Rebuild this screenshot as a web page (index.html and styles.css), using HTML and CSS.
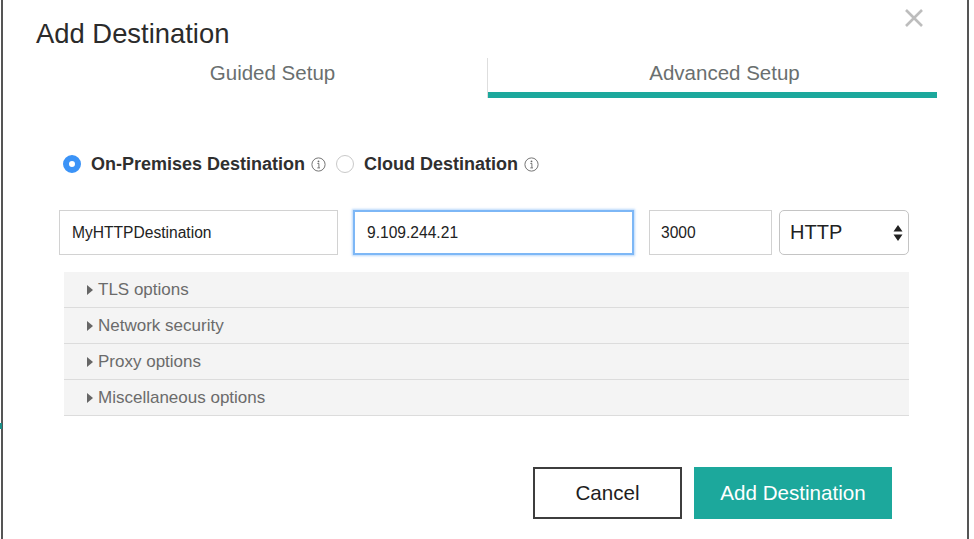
FILE: index.html
```html
<!DOCTYPE html>
<html>
<head>
<meta charset="utf-8">
<title>Add Destination</title>
<link rel="stylesheet" href="styles.css">
</head>
<body>
<div class="edge-mark"></div>
<div class="dialog">
  <button class="close" aria-label="Close">
    <svg width="20" height="20" viewBox="0 0 20 20"><path d="M2 2 L18 18 M18 2 L2 18" stroke="#bdbdbd" stroke-width="2.6" stroke-linecap="butt" fill="none"/></svg>
  </button>
  <h1 class="title">Add Destination</h1>
  <div class="tabs">
    <div class="tab">Guided Setup</div>
    <div class="tab-sep"></div>
    <div class="tab tab-active">Advanced Setup</div>
  </div>

  <div class="radios">
    <label class="radio">
      <span class="dot dot-on"></span>
      <span class="radio-label">On-Premises Destination</span>
      <svg class="info" width="15" height="15" viewBox="0 0 15 15"><circle cx="7.5" cy="7.5" r="6.6" fill="none" stroke="#666" stroke-width="0.9"/><circle cx="7.5" cy="4.4" r="0.9" fill="#666"/><path d="M6.4 6.5 H7.9 V10.8 M6.3 10.9 H9" stroke="#666" stroke-width="0.9" fill="none"/></svg>
    </label>
    <label class="radio">
      <span class="dot"></span>
      <span class="radio-label">Cloud Destination</span>
      <svg class="info" width="15" height="15" viewBox="0 0 15 15"><circle cx="7.5" cy="7.5" r="6.6" fill="none" stroke="#666" stroke-width="0.9"/><circle cx="7.5" cy="4.4" r="0.9" fill="#666"/><path d="M6.4 6.5 H7.9 V10.8 M6.3 10.9 H9" stroke="#666" stroke-width="0.9" fill="none"/></svg>
    </label>
  </div>

  <div class="fields">
    <div class="field f-name">MyHTTPDestination</div>
    <div class="field f-host focused">9.109.244.21</div>
    <div class="field f-port">3000</div>
    <div class="select">
      <span>HTTP</span>
      <svg width="10" height="20" viewBox="0 0 10 20"><path d="M5 2 L9.5 8.5 H0.5 Z M5 18 L9.5 11.5 H0.5 Z" fill="#222"/></svg>
    </div>
  </div>

  <div class="accordion">
    <div class="acc-row"><span class="caret"></span>TLS options</div>
    <div class="acc-row"><span class="caret"></span>Network security</div>
    <div class="acc-row"><span class="caret"></span>Proxy options</div>
    <div class="acc-row"><span class="caret"></span>Miscellaneous options</div>
  </div>

  <div class="actions">
    <button class="btn btn-cancel">Cancel</button>
    <button class="btn btn-primary">Add Destination</button>
  </div>
</div>
</body>
</html>
```

FILE: styles.css
```css
html, body {
  margin: 0;
  padding: 0;
  background: #ffffff;
  font-family: "Liberation Sans", Arial, Helvetica, sans-serif;
  overflow: hidden;
}

.edge-mark {
  position: absolute;
  left: 0;
  top: 423px;
  width: 2px;
  height: 6px;
  background: #1a8f88;
  z-index: 2;
}

.dialog {
  position: relative;
  margin-left: 1px;
  width: 968px;
  height: 539px;
  border-left: 2px solid #555;
  border-right: 2px solid #555;
  background: #fff;
  display: flex;
  flex-direction: column;
  padding-top: 19px;
  box-sizing: border-box;
}

.close {
  position: absolute;
  top: 7px;
  left: 899px;
  width: 24px;
  height: 22px;
  padding: 0;
  border: 0;
  background: transparent;
  display: flex;
  align-items: center;
  justify-content: center;
}

.title {
  margin: 0 0 0 33px;
  font-size: 27.4px;
  line-height: 30px;
  font-weight: normal;
  color: #2b2b2b;
}

.tabs {
  margin-top: 9px;
  margin-left: 55px;
  display: flex;
  height: 40px;
}

.tab {
  width: 429px;
  height: 40px;
  box-sizing: border-box;
  text-align: center;
  font-size: 20.5px;
  line-height: 30px;
  color: #6a6f6f;
}

.tab-sep {
  width: 1px;
  height: 40px;
  background: #dedede;
}

.tab-active {
  width: 449px;
  padding-left: 24px;
  border-bottom: 6px solid #1ca89c;
}

.radios {
  margin-top: 54px;
  margin-left: 60px;
  display: flex;
  align-items: center;
  height: 24px;
}

.radio {
  display: flex;
  align-items: center;
}

.dot {
  width: 18px;
  height: 18px;
  box-sizing: border-box;
  border-radius: 50%;
  border: 1px solid #c9c9c9;
  background: #fff;
  margin-right: 10px;
}

.dot-on {
  border: 6px solid #3b93f7;
  background: #fff;
}

.radio-label {
  font-size: 18px;
  font-weight: bold;
  color: #2f2f2f;
}

.info {
  margin-left: 6px;
  margin-right: 10px;
}

.fields {
  margin-top: 34px;
  margin-left: 56px;
  display: flex;
  height: 45px;
}

.field {
  height: 45px;
  box-sizing: border-box;
  border: 1px solid #d2d2d2;
  font-size: 15.6px;
  line-height: 44px;
  padding-left: 12px;
  color: #222;
}

.f-name { width: 279px; margin-right: 15px; }

.f-host {
  width: 281px;
  margin-right: 15px;
}

.focused {
  border: 2px solid #7db7f6;
  line-height: 42px;
  padding-left: 12px;
  box-shadow: 0 0 2px 1px rgba(125, 183, 246, 0.55);
}

.f-port { width: 123px; margin-right: 7px; padding-left: 11px; }

.select {
  width: 130px;
  height: 45px;
  box-sizing: border-box;
  border: 1px solid #c4c4c4;
  border-radius: 5px;
  display: flex;
  align-items: center;
  justify-content: space-between;
  padding: 0 5px 0 10px;
  font-size: 20px;
  color: #222;
}

.accordion {
  margin-top: 17px;
  margin-left: 61px;
  width: 845px;
  background: #f4f4f4;
}

.acc-row {
  height: 36px;
  box-sizing: border-box;
  border-bottom: 1px solid #dcdcdc;
  display: flex;
  align-items: center;
  padding-left: 23px;
  padding-top: 1px;
  font-size: 17px;
  color: #6b6b6b;
}

.caret {
  width: 0;
  height: 0;
  border-top: 5px solid transparent;
  border-bottom: 5px solid transparent;
  border-left: 6px solid #666;
  margin-right: 5px;
}

.actions {
  margin-top: 51px;
  margin-left: 530px;
  display: flex;
  gap: 12px;
}

.btn {
  height: 52px;
  font-family: "Liberation Sans", Arial, Helvetica, sans-serif;
  font-size: 20.6px;
  padding: 0;
  box-sizing: border-box;
}

.btn-cancel {
  width: 149px;
  background: #fff;
  border: 2px solid #3d3d3d;
  color: #1e1e1e;
}

.btn-primary {
  width: 198px;
  background: #1ca89c;
  border: 1px solid #1ca89c;
  color: #fff;
}
```
